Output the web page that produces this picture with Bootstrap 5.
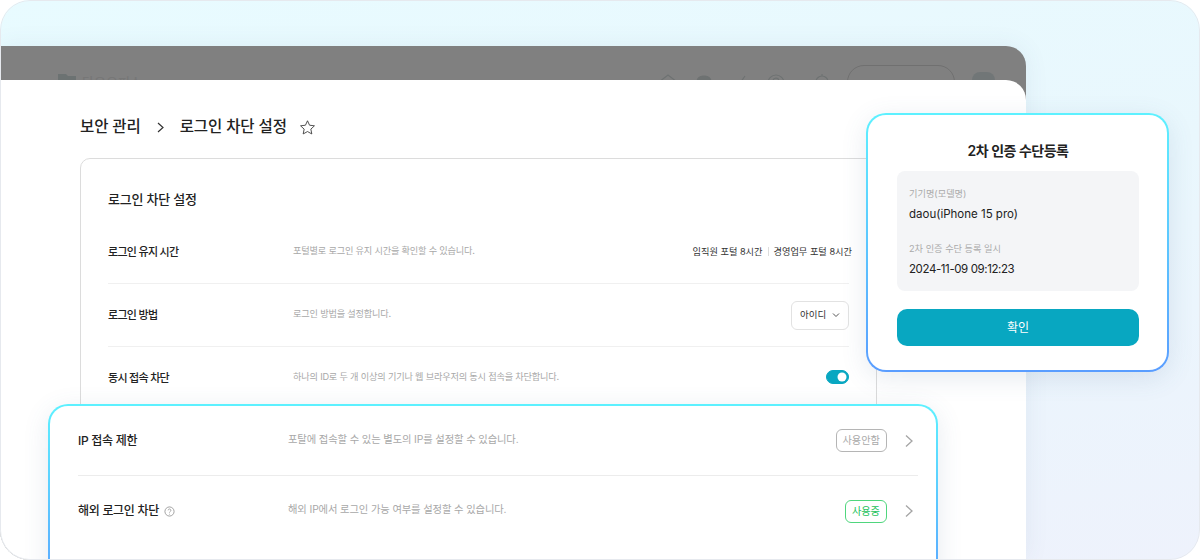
<!DOCTYPE html>
<html lang="ko">
<head>
<meta charset="utf-8">
<title>로그인 차단 설정</title>
<link href="https://cdn.jsdelivr.net/npm/bootstrap@5.3.0/dist/css/bootstrap.min.css" rel="stylesheet">
<style>
html,body{margin:0;height:560px;overflow:hidden;background:#fff}
body{font-family:Inter,"Noto Sans CJK KR","Noto Sans",sans-serif;color:#222}
.stage{position:relative;width:1200px;height:560px;border-radius:30px;overflow:hidden;background:linear-gradient(170deg,#e8fbff 0%,#e9f7fd 45%,#eef2fc 100%)}
.stage::after{content:"";position:absolute;inset:0;border:1px solid #e6e9ee;border-radius:30px;pointer-events:none;z-index:5}
.win{width:1026px;margin-top:46px;height:514px;border-radius:0 20px 0 0;background:#808080;box-shadow:0 0 24px rgba(60,90,130,.08)}
.win-head{height:34px;overflow:hidden;padding-left:57px;padding-right:31px;padding-top:23px;color:#6f6f6f}
.win-head .brand{font-size:13px;font-weight:500;color:#777;line-height:18px;margin:4px 0 0 5px}
.head-logo{width:20px;height:20px;flex:none;margin-top:3px}
.head-ico{width:20px;height:20px;flex:none;fill:none;stroke:#6e7272;stroke-width:1.2;margin-top:4px}
.head-gapb{margin-left:26px}
.head-pill{width:108px;height:34px;border:1px solid #707070;border-radius:17px;margin-top:-4px;margin-left:15px}
.head-ava{width:23px;height:30px;border-radius:8px;background:#717677;margin-top:3px;margin-left:17px}
.sheet{height:480px;background:#fff;border-radius:0 20px 0 0;padding:35px 149px 0 80px}
.crumb{font-size:15.5px;line-height:24px;font-weight:500;letter-spacing:-.1px;color:#222}
.crumb-sep{width:9px;height:11px;margin:0 15px;fill:none;stroke:#333;stroke-width:1.2}
.star{width:17px;height:17px;margin-left:12px;fill:none;stroke:#333;stroke-width:1.2}
.panel{margin-top:19px;width:797px;height:400px;border:1px solid #dcdcdc;border-radius:10px 10px 0 0;padding:29px 27px 0;background:#fff}
.panel-title{font-size:13px;line-height:22px;font-weight:500;margin-bottom:11px;letter-spacing:-.2px}
.s-row{height:63px;border-bottom:1px solid #f0f0f0}
.s-row:last-child{border-bottom:0}
.s-name{width:185px;font-size:11px;font-weight:500;color:#222;flex:none;letter-spacing:-.7px}
.s-desc{font-size:9.2px;color:#a8a8a8;margin-bottom:3px;letter-spacing:-.2px}
.s-val{font-size:9.2px;font-weight:400;color:#333;margin-right:-3px}
.s-bar{width:1px;height:9px;background:#ddd;margin:0 5px}
.fake-select{width:58px;height:29px;border:1px solid #e2e2e2;border-radius:6px;padding:0 8px;font-size:9.5px;color:#333;background:#fff}
.fake-select svg{width:8px;height:6px;fill:none;stroke:#555;stroke-width:1}
.form-switch .tog{width:23px;height:14px;margin:0;background-color:#08a7c1;border-color:#08a7c1;float:none}
.form-check.tog-wrap{padding:0;margin:0 0 4px;min-height:0;line-height:0}
.glow{position:absolute;border:2px solid transparent;background:linear-gradient(#fff,#fff) padding-box,linear-gradient(180deg,#5df1ff 0%,#5a9dff 100%) border-box;border-radius:20px;box-shadow:0 6px 26px rgba(70,100,140,.13)}
.g-a{left:866px;top:113px;width:303px;height:259px;padding:26px 28px 0 29px;z-index:3}
.g-a h2{font-size:14px;line-height:20px;font-weight:600;text-align:center;margin:0 0 10px;color:#222;letter-spacing:-.5px}
.infobox{background:#f4f5f7;border-radius:8px;height:120px;padding:16px 12px 0}
.i-lab{font-size:9.2px;line-height:14px;color:#aaa;margin-bottom:5px}
.i-val{font-size:11.5px;line-height:16px;color:#222;margin-bottom:20px}
.i-date{letter-spacing:-.4px}
.okbtn{width:100%;height:37px;margin-top:18px;background:#08a7c1;color:#fff;border:0;border-radius:10px;font-size:12px;padding:0}
.g-b{left:48px;top:404px;width:890px;height:200px;padding:0 18px 0 28px;z-index:2}
.b-row{height:70px;border-bottom:1px solid #ececec}
.b-row:last-child{border-bottom:0}
.b-name{width:210px;flex:none;font-size:12px;font-weight:500;color:#222;letter-spacing:-.3px}
.b-desc{font-size:10.3px;color:#a8a8a8;margin-bottom:2px;letter-spacing:-.12px}
.tagx{font-size:10.2px;line-height:21px;height:23px;border-radius:6px;border:1px solid;padding:0 6px}
.tag-off{color:#a9a9a9;border-color:#b5b5b5}
.tag-on{color:#25c25c;border-color:#4fd67d}
.chev{width:8px;height:14px;margin:0 5px 0 18px;fill:none;stroke:#a5a5a5;stroke-width:1.3}
.help{width:11px;height:11px;margin-left:5px;fill:none;stroke:#9a9a9a;stroke-width:1}
</style>
</head>
<body>
<div class="stage">
  <div class="win">
    <div class="win-head d-flex align-items-start">
      <svg class="head-logo" viewBox="0 0 20 20"><path d="M1 18V2h8l2 2h8v14z" fill="#6c7272"/></svg>
      <span class="brand">다우오피스</span>
      <div class="ms-auto d-flex align-items-start">
        <svg class="head-ico" viewBox="0 0 20 20"><path d="M1 9l9-7 9 7v10H1z"/></svg>
        <svg class="head-ico ms-3" viewBox="0 0 20 20"><rect x="3" y="3" width="14" height="14" rx="6" fill="#6e7272"/></svg>
        <svg class="head-ico ms-3" viewBox="0 0 20 20"><path d="M15 3l-7 10v5"/></svg>
        <svg class="head-ico ms-3" viewBox="0 0 20 20"><circle cx="10" cy="10" r="8"/><path d="M7 8a3 3 0 1 1 4 3"/></svg>
        <svg class="head-ico head-gapb" viewBox="0 0 20 20"><path d="M4 16V9a6 6 0 0 1 12 0v7zM10 1v2"/></svg>
        <div class="head-pill"></div>
        <div class="head-ava"></div>
      </div>
    </div>
    <div class="sheet">
      <div class="crumb d-flex align-items-center">
        <span>보안 관리</span>
        <svg class="crumb-sep" viewBox="0 0 9 11"><path d="M2 1l5 4.500-5 4.500"/></svg>
        <span>로그인 차단 설정</span>
        <svg class="star" viewBox="0 0 24 24"><path d="M12 2.500l2.900 6.300 6.900.8-5.100 4.700 1.400 6.800-6.100-3.400-6.100 3.400 1.400-6.800L2.200 9.600l6.900-.8z"/></svg>
      </div>
      <div class="panel">
        <div class="panel-title">로그인 차단 설정</div>
        <div class="s-row d-flex align-items-center">
          <div class="s-name">로그인 유지 시간</div>
          <div class="s-desc">포털별로 로그인 유지 시간을 확인할 수 있습니다.</div>
          <div class="ms-auto d-flex align-items-center s-val"><span>임직원 포털 8시간</span><span class="s-bar"></span><span>경영업무 포털 8시간</span></div>
        </div>
        <div class="s-row d-flex align-items-center">
          <div class="s-name">로그인 방법</div>
          <div class="s-desc">로그인 방법을 설정합니다.</div>
          <div class="ms-auto fake-select d-flex align-items-center justify-content-between"><span>아이디</span><svg viewBox="0 0 8 6"><path d="M1 1.500l3 3 3-3"/></svg></div>
        </div>
        <div class="s-row d-flex align-items-center">
          <div class="s-name">동시 접속 차단</div>
          <div class="s-desc">하나의 ID로 두 개 이상의 기기나 웹 브라우저의 동시 접속을 차단합니다.</div>
          <div class="ms-auto form-check form-switch tog-wrap"><input class="form-check-input tog" type="checkbox" role="switch" checked aria-label="동시 접속 차단"></div>
        </div>
      </div>
    </div>
  </div>

  <div class="glow g-a">
    <h2>2차 인증 수단등록</h2>
    <div class="infobox">
      <div class="i-lab">기기명(모델명)</div>
      <div class="i-val">daou(iPhone 15 pro)</div>
      <div class="i-lab">2차 인증 수단 등록 일시</div>
      <div class="i-val i-date">2024-11-09 09:12:23</div>
    </div>
    <button type="button" class="btn okbtn">확인</button>
  </div>

  <div class="glow g-b">
    <div class="b-row d-flex align-items-center">
      <div class="b-name">IP 접속 제한</div>
      <div class="b-desc">포탈에 접속할 수 있는 별도의 IP를 설정할 수 있습니다.</div>
      <span class="ms-auto tagx tag-off">사용안함</span>
      <svg class="chev" viewBox="0 0 8 14"><path d="M1 1.500l6 5.500-6 5.500"/></svg>
    </div>
    <div class="b-row d-flex align-items-center">
      <div class="b-name d-flex align-items-center">해외 로그인 차단<svg class="help" viewBox="0 0 12 12"><circle cx="6" cy="6" r="5"/><path d="M4.500 4.700a1.500 1.500 0 1 1 2.200 1.400c-.5.300-.7.500-.7 1"/><path d="M6 8.500v.8"/></svg></div>
      <div class="b-desc">해외 IP에서 로그인 가능 여부를 설정할 수 있습니다.</div>
      <span class="ms-auto tagx tag-on">사용중</span>
      <svg class="chev" viewBox="0 0 8 14"><path d="M1 1.500l6 5.500-6 5.500"/></svg>
    </div>
  </div>
</div>
<script src="https://cdn.jsdelivr.net/npm/bootstrap@5.3.0/dist/js/bootstrap.bundle.min.js"></script>
</body>
</html>
